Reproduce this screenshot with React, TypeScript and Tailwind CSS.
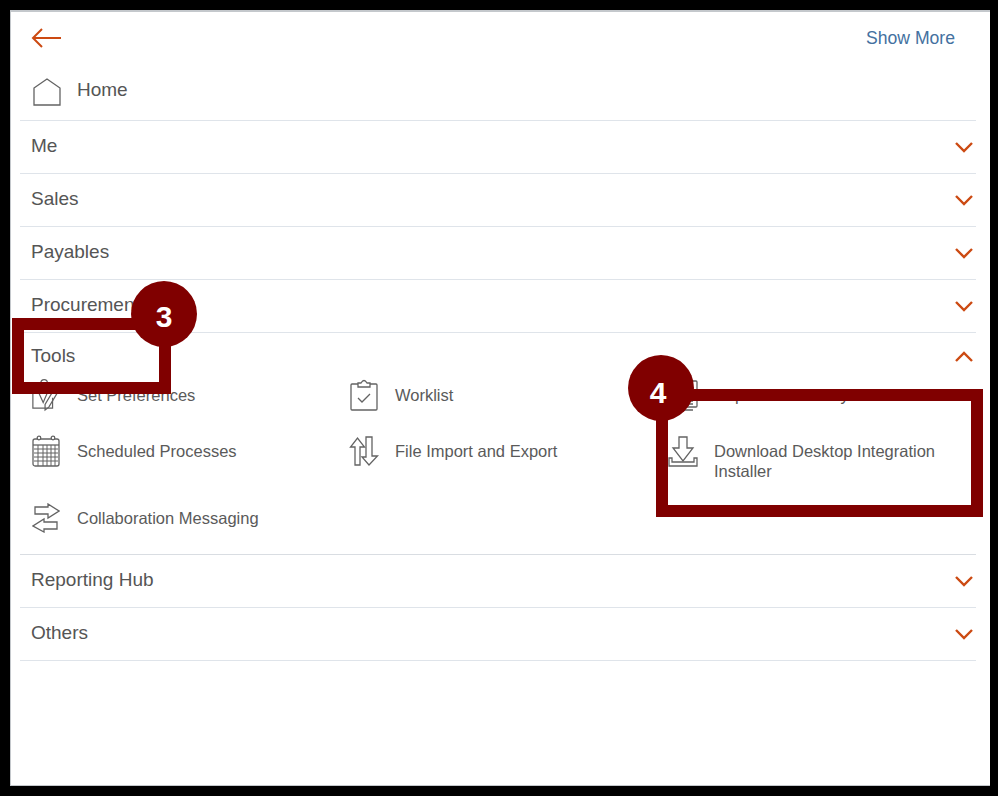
import React from "react";

function Chevron({ up = false }: { up?: boolean }) {
  return (
    <svg
      width="18"
      height="11"
      viewBox="0 0 18 11"
      fill="none"
      stroke="#cc4a12"
      strokeWidth="2.4"
      className={up ? "" : "mt-[3px]"}
    >
      <path d={up ? "M1 10 L9 2 L17 10" : "M1 1 L9 9 L17 1"} />
    </svg>
  );
}

function Row({ label }: { label: string }) {
  return (
    <div className="flex h-[53px] items-center justify-between border-b border-[#dfe4ea] pl-[11px] pr-[3px] pb-[2px]">
      <span className="text-[19px] text-[#555555]">{label}</span>
      <Chevron />
    </div>
  );
}

const stroke = { fill: "none", stroke: "#636363", strokeWidth: 1.3 };

function HomeIcon() {
  return (
    <svg width="30" height="30" viewBox="0 0 30 30" {...stroke}>
      <path d="M2 11 L15 2 L28 11 V28 H2 Z" />
    </svg>
  );
}

function PrefsIcon() {
  return (
    <svg width="32" height="34" viewBox="0 0 32 34" {...stroke}>
      <circle cx="14" cy="4" r="3.5" />
      <path d="M23 20 V31 H2 V10 H20" />
      <path d="M8 14 L13 25 L19 11" />
      <path d="M27 7 L31 10 L19 30 L15 33 L15 27 Z" />
    </svg>
  );
}

function WorklistIcon() {
  return (
    <svg width="28" height="32" viewBox="0 0 28 32" {...stroke}>
      <path d="M8 5 H2 Q1 5 1 6 V30 Q1 31 2 31 H26 Q27 31 27 30 V6 Q27 5 26 5 H20" />
      <path d="M8 8 V4 H11 Q14 -1 17 4 H20 V8 Z" />
      <path d="M8 19 L12 23 L20 15" />
    </svg>
  );
}

function ReportsIcon() {
  return (
    <svg width="30" height="32" viewBox="0 0 30 32" {...stroke}>
      <rect x="9" y="2" width="20" height="26" rx="1" />
      <path d="M5 8 V31 H25" />
      <path d="M13 18 H25 M13 22 H25 M13 25 H25" />
    </svg>
  );
}

function CalendarIcon() {
  return (
    <svg width="28" height="32" viewBox="0 0 28 32" {...stroke}>
      <rect x="1" y="4" width="26" height="27" rx="2" />
      <path d="M1 10 H27" />
      <circle cx="7" cy="3" r="1.8" fill="#fff" />
      <circle cx="21" cy="3" r="1.8" fill="#fff" />
      <path
        d="M2 14 H26 M2 18 H26 M2 22 H26 M2 26 H26 M6 10 V31 M11 10 V31 M15 10 V31 M19 10 V31 M23 10 V31"
        strokeWidth="1"
      />
    </svg>
  );
}

function ImportExportIcon() {
  return (
    <svg width="30" height="30" viewBox="0 0 30 30" {...stroke}>
      <path d="M6 29 V11 H1.5 L8.5 2 L15.5 11 H11 V29 Z" />
      <path d="M17 1 H23 V20 H28.5 L20 29 L13 21 H17 Z" />
    </svg>
  );
}

function DownloadIcon() {
  return (
    <svg width="30" height="31" viewBox="0 0 30 31" {...stroke}>
      <path d="M11 1 H19 V12 H25 L15 25 L5 12 H11 Z" />
      <path d="M1 22 H4 V26 H26 V22 H29 V30 H1 Z" />
    </svg>
  );
}

function CollabIcon() {
  return (
    <svg width="28" height="30" viewBox="0 0 28 30" {...stroke}>
      <path d="M3 4 H16 V1 L27 8 L16 15 V11 H3 Z" />
      <path d="M25 19 H12 V16 L1 23 L12 29 V26 H25 Z" />
    </svg>
  );
}

function Item({ icon, label }: { icon: React.ReactNode; label: string }) {
  return (
    <div className="flex items-start gap-[16px]">
      <div className="flex h-[20px] w-[30px] shrink-0 items-center justify-center">{icon}</div>
      <span className="w-[240px] text-[16.5px] leading-[20px] text-[#5a5a5a]">{label}</span>
    </div>
  );
}

export default function App() {
  return (
    <div className="relative h-[796px] w-[998px] overflow-hidden bg-black p-[10px] font-['Liberation_Sans',Arial,sans-serif]">
      <div className="h-[776px] w-[980px] border-t-2 border-l border-b border-[#c4c8cc] bg-white pl-[9px] pr-[14px]">
        <div className="flex h-[52px] items-center justify-between pl-[11px] pr-[21px]">
          <svg width="30" height="22" viewBox="0 0 30 22" fill="none" stroke="#cc4a12" strokeWidth="2">
            <path d="M30 11 H2 M11 2 L2 11 L11 20" />
          </svg>
          <span className="text-[17.6px] text-[#44719f]">Show More</span>
        </div>
        <div className="flex h-[57px] items-center gap-[15px] border-b border-[#dfe4ea] pl-[12px]">
          <HomeIcon />
          <span className="mb-[3px] text-[19px] text-[#555555]">Home</span>
        </div>
        <Row label="Me" />
        <Row label="Sales" />
        <Row label="Payables" />
        <Row label="Procurement" />
        <div className="border-b border-[#d9dde2] pl-[11px] pr-[3px]">
          <div className="flex h-[46px] items-center justify-between">
            <span className="text-[19px] text-[#555555]">Tools</span>
            <Chevron up />
          </div>
          <div className="grid grid-cols-[318px_319px_1fr] grid-rows-[56px_67px_46px] pt-[6px]">
            <Item icon={<PrefsIcon />} label="Set Preferences" />
            <Item icon={<WorklistIcon />} label="Worklist" />
            <Item icon={<ReportsIcon />} label="Reports and Analytics" />
            <Item icon={<CalendarIcon />} label="Scheduled Processes" />
            <Item icon={<ImportExportIcon />} label="File Import and Export" />
            <Item icon={<DownloadIcon />} label="Download Desktop Integration Installer" />
            <Item icon={<CollabIcon />} label="Collaboration Messaging" />
          </div>
        </div>
        <Row label="Reporting Hub" />
        <Row label="Others" />
      </div>

      {/* callouts */}
      <div className="absolute left-[12px] top-[318px] h-[76px] w-[159px] border-[12px] border-[#800000]" />
      <div className="absolute left-[131px] top-[281px] flex h-[66px] w-[66px] items-center justify-center rounded-full bg-[#800000] pt-[4px] text-[30px] font-bold text-white">
        3
      </div>
      <div className="absolute left-[656px] top-[389px] h-[128px] w-[327px] border-[12px] border-[#800000]" />
      <div className="absolute left-[628px] top-[355px] flex h-[66px] w-[66px] items-center justify-center rounded-full bg-[#800000] pt-[9px] pr-[6px] text-[30px] font-bold text-white">
        4
      </div>
    </div>
  );
}
